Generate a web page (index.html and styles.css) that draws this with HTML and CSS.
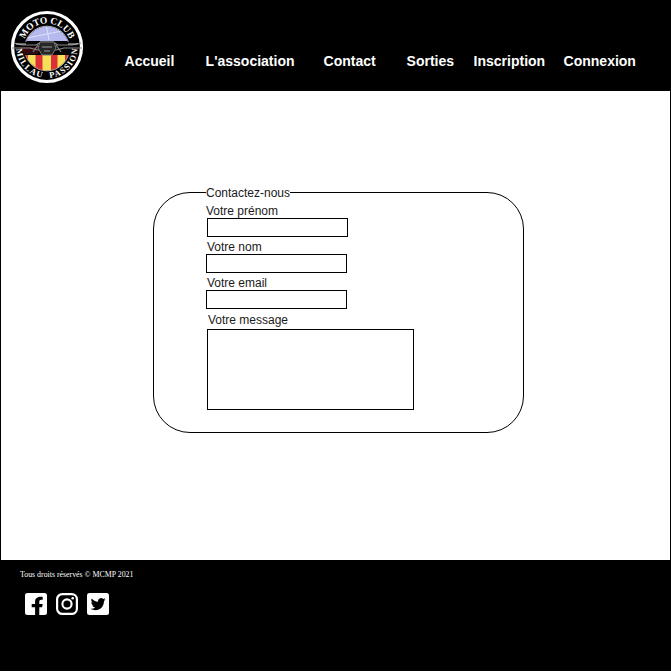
FILE: index.html
```html
<!DOCTYPE html>
<html lang="fr">
<head>
<meta charset="utf-8">
<title>Moto Club Millau Passion</title>
<link rel="stylesheet" href="styles.css">
</head>
<body>
<div class="page">
  <header class="header">
    <svg class="logo" viewBox="0 0 76 76" role="img">
      <defs>
        <path id="arc-top" d="M14.500 35 A23.700 23.700 0 0 1 61.500 35"/>
        <path id="arc-bottom" d="M7.500 36 A30.600 30.600 0 1 0 68.500 36"/>
        <clipPath id="disc"><circle cx="38" cy="39.500" r="22"/></clipPath>
      </defs>
      <circle cx="38" cy="38" r="34.500" fill="#000" stroke="#fff" stroke-width="3.200"/>
      <circle cx="38" cy="39.500" r="22.300" fill="#000" stroke="#ddd" stroke-width=".8"/>
      <g clip-path="url(#disc)">
        <path fill="#b5b9ee" d="M15 15h46v17H15z"/>
        <path d="M18 29 58 21M37 15l3 16" stroke="#dfe2fb" fill="none"/>
        <path fill="#f5df58" d="M15 46h46v17H15z"/>
        <path fill="#dc3038" d="M15 46h4v17h-4zM26.500 46h7v17h-7zM42 46h6.500v17H42zM56 46h6v17h-6z"/>
      </g>
      <path fill="#050505" d="M6 33h64v7l-9 6H15L6 40z"/>
      <path fill="#310b10" d="M10 38h19v7H15z"/>
      <path d="M5 34 13 36h14l5-3h12l5 3h14l9-2M3 39h18l8 2h18l8-2h18M29 36l-5 7M47 36l5 7" fill="none" stroke="#858585" stroke-width="1.200"/>
      <path d="M7 35h10M59 35h10" stroke="#ccc"/>
      <path d="M31 33h14l2 6-4 7H33l-4-7z" fill="#262626" stroke="#777"/>
      <path d="M33 38h10M35 42h6" stroke="#999"/>
      <text class="logo-text"><textPath href="#arc-top" startOffset="50%" text-anchor="middle" textLength="58">MOTO CLUB</textPath></text>
      <text class="logo-text logo-text-small"><textPath href="#arc-bottom" startOffset="50%" text-anchor="middle" textLength="93">MILLAU &#160;PASSION</textPath></text>
    </svg>
    <nav class="nav">
      <a>Accueil</a><a>L'association</a><a>Contact</a><a>Sorties</a><a>Inscription</a><a>Connexion</a>
    </nav>
  </header>
  <main class="main">
    <fieldset class="contact">
      <legend>Contactez-nous</legend>
      <div class="field first"><label for="prenom">Votre prénom</label><input id="prenom"></div>
      <div class="field"><label for="nom">Votre nom</label><input id="nom"></div>
      <div class="field"><label for="email">Votre email</label><input id="email"></div>
      <div class="field message"><label for="message">Votre message</label><textarea id="message"></textarea></div>
    </fieldset>
  </main>
  <footer class="footer">
    <p>Tous droits réservés © MCMP 2021</p>
    <div class="social">
      <svg viewBox="0 0 22 22"><path fill="#fff" d="M2.5 0h17A2.5 2.5 0 0 1 22 2.5v17a2.5 2.5 0 0 1-2.5 2.5h-5.200v-7.700h2.800l.6-3.200h-3.400V9c0-1.600.7-2.300 2-2.300h1.400V4c-3.800-.8-7.600.5-7.600 4.500v2.600H6.700v3.200h3.400V22H2.500A2.500 2.500 0 0 1 0 19.500v-17A2.500 2.500 0 0 1 2.500 0z"/></svg>
      <svg viewBox="0 0 22 22" fill="none" stroke="#fff"><rect x="1.100" y="1.100" width="19.800" height="19.800" rx="5.200" stroke-width="2.200"/><circle cx="11" cy="11" r="4.600" stroke-width="2.100"/><circle cx="16.700" cy="5.300" r="1.300" fill="#fff" stroke="none"/></svg>
      <svg viewBox="0 0 22 22"><rect width="22" height="22" rx="2.500" fill="#fff"/><path d="M18.500 6.300c-.6.300-1.100.4-1.700.5.600-.4 1.100-1 1.300-1.700-.6.400-1.200.6-1.900.8A3.100 3.100 0 0 0 11 8.700c-2.500-.1-4.800-1.300-6.300-3.200-.8 1.300-.5 3.100.9 4.100-.5 0-1-.1-1.400-.4 0 1.500 1.100 2.800 2.500 3.100-.4.100-.9.100-1.400 0 .4 1.300 1.500 2.100 2.900 2.100a6.200 6.200 0 0 1-4.600 1.300c5.900 3.700 13.400.1 13.400-7.700.6-.5 1.100-1 1.500-1.700z"/></svg>
    </div>
  </footer>
</div>
</body>
</html>
```
FILE: styles.css
```css
* { box-sizing: border-box; }
body { margin: 0; background: #fff; font-family: "Liberation Sans", Arial, sans-serif; }
.page { width: 671px; height: 671px; display: flex; flex-direction: column; border: 1px solid #000; }
.header { height: 90px; flex: none; display: flex; background: #000; color: #fff; }
.logo { width: 76px; height: 76px; margin: 8px 0 0 8px; flex: none; }
.logo-text { font: bold 9.5px "Liberation Serif", serif; fill: #fff; }
.logo-text-small { font-size: 8.5px; }
.nav {
  display: grid;
  grid-template-columns: 81px 118px 83px 67px 90px 80px;
  margin: 52px 0 0 39.6px;
  height: 16px;
  font-size: 14px;
  line-height: 16px;
  font-weight: bold;
  white-space: nowrap;
}
.main { flex: 1; padding: 95px 0 0 152px; font-size: 12px; line-height: 14px; color: #1a1a1a; }
.contact { width: 371px; height: 247px; margin: 0; padding: 0 0 0 52px; border: 1px solid #000; border-radius: 37px; }
legend { height: 13px; padding: 0; }
.field { height: 36px; }
.field label { display: block; height: 14px; margin-left: 1px; }
.field input, .field textarea {
  display: block;
  width: 141px;
  height: 19px;
  margin: 0;
  padding: 0;
  border: 1px solid #000;
  border-radius: 0;
  background: #fff;
  resize: none;
}
.field.first { padding-top: 5px; height: 41px; }
.first label { margin-left: 0; }
.first input { margin-left: 1px; }
.message { padding-top: 1px; }
.message label { margin-left: 2px; }
.field textarea { width: 207px; height: 81px; margin: 2px 0 0 1px; }
.footer { height: 110px; flex: none; background: #000; color: #fff; padding: 10px 0 0 19px; }
.footer p { margin: 0; font: 7.85px/10px "Liberation Serif", serif; }
.social { display: flex; gap: 9px; margin: 13px 0 0 4.500px; }
.social svg { width: 22px; height: 22px; display: block; }
```
